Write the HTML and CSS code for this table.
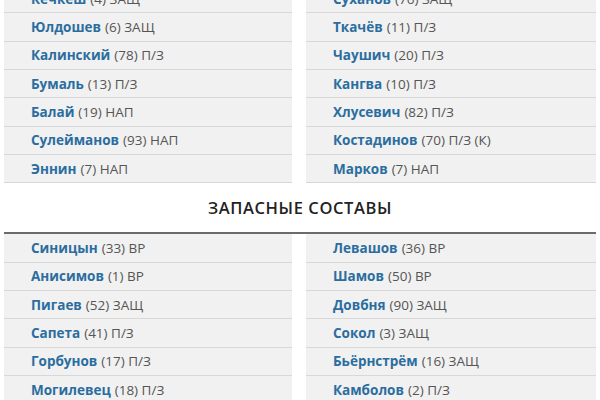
FILE: index.html
```
<!DOCTYPE html>
<html lang="ru">
<head>
<meta charset="utf-8">
<title>Составы</title>
<link rel="stylesheet" href="styles.css">
</head>
<body>
<div class="page">
  <section class="lineup main">
    <ul class="col">
      <li class="row"><span class="name">Кечкеш</span> (4) ЗАЩ</li>
      <li class="row"><span class="name">Юлдошев</span> (6) ЗАЩ</li>
      <li class="row"><span class="name">Калинский</span> (78) П/З</li>
      <li class="row"><span class="name">Бумаль</span> (13) П/З</li>
      <li class="row"><span class="name">Балай</span> (19) НАП</li>
      <li class="row"><span class="name">Сулейманов</span> (93) НАП</li>
      <li class="row"><span class="name">Эннин</span> (7) НАП</li>
    </ul>
    <ul class="col">
      <li class="row"><span class="name">Суханов</span> (76) ЗАЩ</li>
      <li class="row"><span class="name">Ткачёв</span> (11) П/З</li>
      <li class="row"><span class="name">Чаушич</span> (20) П/З</li>
      <li class="row"><span class="name">Кангва</span> (10) П/З</li>
      <li class="row"><span class="name">Хлусевич</span> (82) П/З</li>
      <li class="row"><span class="name">Костадинов</span> (70) П/З (К)</li>
      <li class="row"><span class="name">Марков</span> (7) НАП</li>
    </ul>
  </section>
  <h2 class="title">ЗАПАСНЫЕ СОСТАВЫ</h2>
  <section class="lineup subs">
    <ul class="col">
      <li class="row"><span class="name">Синицын</span> (33) ВР</li>
      <li class="row"><span class="name">Анисимов</span> (1) ВР</li>
      <li class="row"><span class="name">Пигаев</span> (52) ЗАЩ</li>
      <li class="row"><span class="name">Сапета</span> (41) П/З</li>
      <li class="row"><span class="name">Горбунов</span> (17) П/З</li>
      <li class="row"><span class="name">Могилевец</span> (18) П/З</li>
    </ul>
    <ul class="col">
      <li class="row"><span class="name">Левашов</span> (36) ВР</li>
      <li class="row"><span class="name">Шамов</span> (50) ВР</li>
      <li class="row"><span class="name">Довбня</span> (90) ЗАЩ</li>
      <li class="row"><span class="name">Сокол</span> (3) ЗАЩ</li>
      <li class="row"><span class="name">Бьёрнстрём</span> (16) ЗАЩ</li>
      <li class="row"><span class="name">Камболов</span> (2) П/З</li>
    </ul>
  </section>
</div>
</body>
</html>
```
FILE: styles.css
```
html, body {
  margin: 0;
  padding: 0;
  background: #fff;
  overflow: hidden;
}
body {
  font-family: "Open Sans", "DejaVu Sans", sans-serif;
}
.page {
  width: 592px;
  margin: -15px 4px 0 4px;
}
.lineup {
  display: grid;
  grid-template-columns: 288px 290px;
  column-gap: 14px;
}
.subs {
  border-top: 2px solid #6b6b6b;
}
.col {
  list-style: none;
  margin: 0;
  padding: 0;
}
.row {
  box-sizing: border-box;
  height: 28.33px;
  border-bottom: 1px solid #d8d8d8;
  background: #f1f1f1;
  padding-left: 27px;
  display: flex;
  align-items: center;
  gap: 4px;
  font-size: 13.5px;
  color: #555;
}
.name {
  font-weight: 700;
  color: #2b6d9f;
}
.title {
  margin: 0;
  height: 49px;
  display: flex;
  align-items: center;
  justify-content: center;
  font-size: 16.5px;
  font-weight: 600;
  letter-spacing: 0.6px;
  color: #222;
}
```
